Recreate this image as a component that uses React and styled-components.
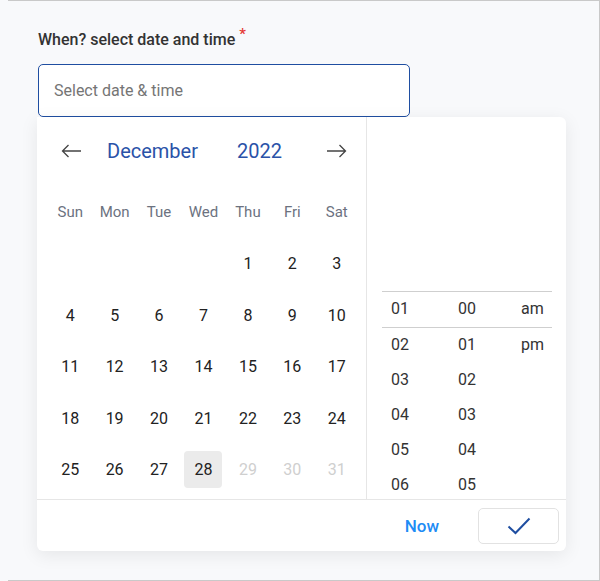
import React from "react";
import styled, { createGlobalStyle } from "styled-components";

const colors = {
  page: "#f8f9fb",
  frame: "#c9c9c9",
  blue: "#1f4ea1",
  title: "#2a52a8",
  now: "#1e8cf5",
  text: "#222",
  muted: "#6c727f",
  disabled: "#cfcfcf",
  line: "#e6e6e6"
};

const GlobalStyle = createGlobalStyle`
  html, body {
    margin: 0;
    background: ${colors.page};
    font-family: Roboto, "Liberation Sans", sans-serif;
  }
`;

const Frame = styled.div`
  margin-left: 8px;
  width: 592px;
  height: 581px;
  box-sizing: border-box;
  border: 1px solid ${colors.frame};
  border-left: none;
  padding: 28px 0 0 30px;
  overflow: hidden;
`;

const Label = styled.div`
  font-size: 16px;
  font-weight: 500;
  line-height: 22px;
  height: 22px;
  color: #333;
  margin-bottom: 13px;
`;

const Required = styled.span`
  color: #e53935;
  font-size: 15px;
  line-height: 0;
  margin-left: 4px;
  position: relative;
  top: -6px;
`;

const Input = styled.div`
  width: 372px;
  height: 53px;
  box-sizing: border-box;
  border: 1px solid ${colors.blue};
  border-radius: 5px;
  background: #fff;
  padding-left: 15px;
  display: flex;
  align-items: center;
  font-size: 16px;
  color: #757575;
`;

const Popup = styled.div`
  margin-left: -1px;
  width: 529px;
  height: 434px;
  background: #fff;
  border-radius: 0 6px 6px 6px;
  box-shadow: 0 4px 18px rgba(0, 0, 0, 0.08);
  display: flex;
  flex-direction: column;
`;

const Body = styled.div`
  flex: 1;
  display: flex;
  min-height: 0;
`;

const Calendar = styled.div`
  width: 330px;
  border-right: 1px solid ${colors.line};
  padding: 0 7px 0 11px;
  box-sizing: border-box;
`;

const Header = styled.div`
  height: 68px;
  display: flex;
  align-items: center;
  padding-left: 13px;
`;

const Arrow = styled.svg`
  width: 21px;
  height: 14px;
  flex: none;
`;

const Month = styled.div`
  font-size: 20px;
  color: ${colors.title};
  margin-left: ${p => p.$gap}px;
`;

const NextArrow = styled.div`
  margin-left: 44px;
  display: flex;
`;

const Grid = styled.div`
  display: grid;
  grid-template-columns: repeat(7, 1fr);
  grid-template-rows: 53px;
  grid-auto-rows: 51.5px;
`;

const WeekDay = styled.div`
  display: flex;
  align-items: center;
  justify-content: center;
  font-size: 15px;
  color: ${colors.muted};
`;

const Day = styled.div`
  display: flex;
  align-items: center;
  justify-content: center;
`;

const DayInner = styled.div`
  width: 38px;
  height: 37px;
  border-radius: 4px;
  display: flex;
  align-items: center;
  justify-content: center;
  font-size: 16px;
  color: ${p => (p.$disabled ? colors.disabled : colors.text)};
  background: ${p => (p.$selected ? "#ebebeb" : "transparent")};
`;

const TimePanel = styled.div`
  flex: 1;
  padding: 174px 14px 0 15px;
  overflow: hidden;
`;

const TimeGrid = styled.div`
  position: relative;
  display: grid;
  grid-template-columns: 67px 63px 1fr;
`;

const Band = styled.div`
  position: absolute;
  left: 0;
  right: 0;
  top: 0;
  height: 35px;
  border-top: 1px solid #cfcfcf;
  border-bottom: 1px solid #cfcfcf;
`;

const TimeCol = styled.div`
  display: flex;
  flex-direction: column;
`;

const TimeCell = styled.div`
  height: 35px;
  box-sizing: border-box;
  padding: 0 0 3px 9px;
  display: flex;
  align-items: center;
  font-size: 16px;
  color: #333;
  &:first-child {
    height: 37px;
  }
`;

const Footer = styled.div`
  height: 51px;
  border-top: 1px solid ${colors.line};
  display: flex;
  align-items: center;
  justify-content: flex-end;
  padding-right: 7px;
`;

const NowButton = styled.div`
  font-size: 17px;
  font-weight: 500;
  color: ${colors.now};
  margin-right: 39px;
`;

const OkButton = styled.div`
  width: 81px;
  height: 36px;
  box-sizing: border-box;
  border: 1px solid #e2e2e2;
  border-radius: 5px;
  display: flex;
  align-items: center;
  justify-content: center;
`;

const weekDays = ["Sun", "Mon", "Tue", "Wed", "Thu", "Fri", "Sat"];

const days = [
  ...Array(4).fill(null),
  ...Array.from({ length: 31 }, (_, i) => i + 1)
];

const hours = ["01", "02", "03", "04", "05", "06"];
const minutes = ["00", "01", "02", "03", "04", "05"];

function ArrowIcon({ dir }) {
  const d =
    dir === "left"
      ? "M20 7H1.5M7.5 1L1.5 7l6 6"
      : "M1 7h18.5M13.5 1l6 6-6 6";
  return (
    <Arrow viewBox="0 0 21 14">
      <path d={d} fill="none" stroke="#444" strokeWidth="1.3" />
    </Arrow>
  );
}

export default function App() {
  return (
    <Frame>
      <GlobalStyle />
      <Label>
        When? select date and time<Required>*</Required>
      </Label>
      <Input>Select date &amp; time</Input>
      <Popup>
        <Body>
          <Calendar>
            <Header>
              <ArrowIcon dir="left" />
              <Month $gap={25}>December</Month>
              <Month $gap={39}>2022</Month>
              <NextArrow>
                <ArrowIcon dir="right" />
              </NextArrow>
            </Header>
            <Grid>
              {weekDays.map(w => (
                <WeekDay key={w}>{w}</WeekDay>
              ))}
              {days.map((d, i) => (
                <Day key={i}>
                  {d && (
                    <DayInner $selected={d === 28} $disabled={d > 28}>
                      {d}
                    </DayInner>
                  )}
                </Day>
              ))}
            </Grid>
          </Calendar>
          <TimePanel>
            <TimeGrid>
              <Band />
              <TimeCol>
                {hours.map(h => (
                  <TimeCell key={h}>{h}</TimeCell>
                ))}
              </TimeCol>
              <TimeCol>
                {minutes.map(m => (
                  <TimeCell key={m}>{m}</TimeCell>
                ))}
              </TimeCol>
              <TimeCol>
                <TimeCell>am</TimeCell>
                <TimeCell>pm</TimeCell>
              </TimeCol>
            </TimeGrid>
          </TimePanel>
        </Body>
        <Footer>
          <NowButton>Now</NowButton>
          <OkButton>
            <svg width="24" height="18" viewBox="0 0 24 18">
              <path
                d="M1.5 9.5l7 6.5L22.5 1.5"
                fill="none"
                stroke={colors.blue}
                strokeWidth="2"
              />
            </svg>
          </OkButton>
        </Footer>
      </Popup>
    </Frame>
  );
}
